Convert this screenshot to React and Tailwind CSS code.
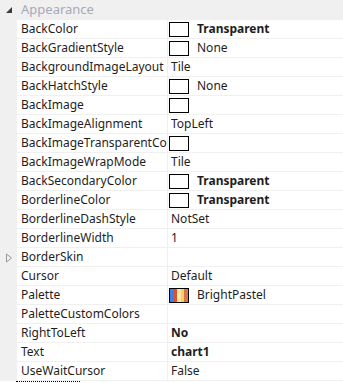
import React from 'react';

const rows = [
  { name: 'BackColor', value: 'Transparent', swatch: 'empty', bold: true },
  { name: 'BackGradientStyle', value: 'None', swatch: 'empty' },
  { name: 'BackgroundImageLayout', value: 'Tile' },
  { name: 'BackHatchStyle', value: 'None', swatch: 'empty' },
  { name: 'BackImage', value: '', swatch: 'empty' },
  { name: 'BackImageAlignment', value: 'TopLeft' },
  { name: 'BackImageTransparentColor', value: '', swatch: 'empty' },
  { name: 'BackImageWrapMode', value: 'Tile' },
  { name: 'BackSecondaryColor', value: 'Transparent', swatch: 'empty', bold: true },
  { name: 'BorderlineColor', value: 'Transparent', swatch: 'empty', bold: true },
  { name: 'BorderlineDashStyle', value: 'NotSet' },
  { name: 'BorderlineWidth', value: '1' },
  { name: 'BorderSkin', value: '', expand: true },
  { name: 'Cursor', value: 'Default' },
  { name: 'Palette', value: 'BrightPastel', swatch: 'palette' },
  { name: 'PaletteCustomColors', value: '' },
  { name: 'RightToLeft', value: 'No', bold: true },
  { name: 'Text', value: 'chart1', bold: true },
  { name: 'UseWaitCursor', value: 'False' },
];

function Swatch({ kind }) {
  if (kind === 'palette') {
    return (
      <div className="w-[20px] h-[15px] border border-black flex shrink-0">
        <div className="flex-1 bg-[#3d7fe8]"></div>
        <div className="flex-1 bg-[#e0502a]"></div>
        <div className="flex-1 bg-[#fce7a4]"></div>
        <div className="flex-1 bg-[#f9cf62]"></div>
        <div className="flex-1 bg-[#d9744a]"></div>
      </div>
    );
  }
  return <div className="w-[20px] h-[15px] border border-black bg-white shrink-0"></div>;
}

export default function App() {
  return (
    <div className="w-[343px] h-[383px] bg-white overflow-hidden text-[12px] text-[#1e1e1e]" style={{ fontFamily: '"Noto Sans", "Open Sans", sans-serif' }}>
      <div className="h-[20px] bg-[#f0f0f0] flex items-center">
        <div className="w-[17px] flex justify-center">
          <svg width="8" height="8" viewBox="0 0 8 8">
            <path d="M7 1 L7 7 L1 7 Z" fill="#3c3c3c" />
          </svg>
        </div>
        <span className="pl-[4px] text-[13px] text-[#a7a9b8]">Appearance</span>
      </div>
      {rows.map((r, i) => (
        <div key={i} className="flex h-[19px]">
          <div className="w-[17px] bg-[#f0f0f0] flex items-center justify-center shrink-0">
            {r.expand && (
              <svg width="8" height="10" viewBox="0 0 8 10">
                <path d="M1.5 1 L6.5 5 L1.5 9 Z" fill="none" stroke="#9a9a9a" strokeWidth="1" />
              </svg>
            )}
          </div>
          <div className="w-[151px] shrink-0 border-r border-b border-[#f0f0f0] pl-[4px] flex items-center overflow-hidden whitespace-nowrap">
            {r.name}
          </div>
          <div className="flex-1 border-b border-[#f0f0f0] flex items-center pl-[1px] gap-[8px] whitespace-nowrap">
            {r.swatch ? <Swatch kind={r.swatch} /> : null}
            {r.value && (
              <span className={`${r.bold ? 'font-bold' : ''} ${r.swatch ? '' : 'pl-[2px]'}`}>{r.value}</span>
            )}
          </div>
        </div>
      ))}
      <div className="ml-[16px] w-[64px] border-t border-dotted border-black"></div>
    </div>
  );
}
